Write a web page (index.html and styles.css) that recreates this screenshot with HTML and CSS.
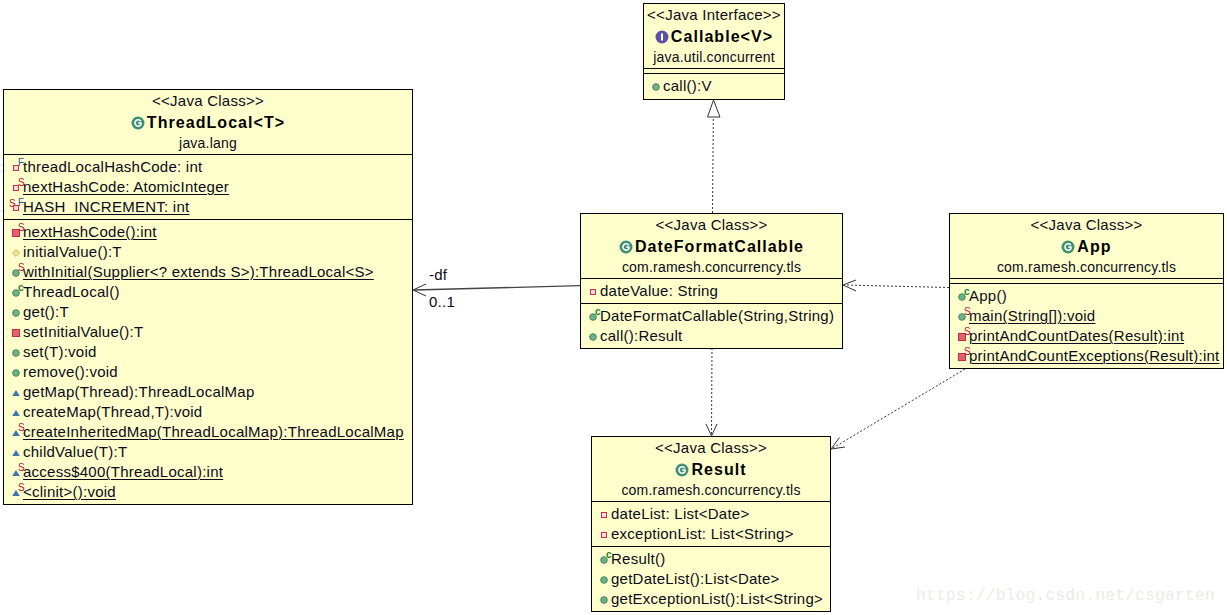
FILE: index.html
```html
<!DOCTYPE html>
<html lang="en">
<head>
<meta charset="utf-8">
<title>UML class diagram</title>
<link rel="stylesheet" href="styles.css">
</head>
<body>
<svg class="defs" width="0" height="0" aria-hidden="true">
  <symbol id="i-pub" viewBox="0 0 8 8"><circle cx="4" cy="4" r="3.3" fill="#6fb088" stroke="#3f8a5f" stroke-width="1"/></symbol>
  <symbol id="i-pri" viewBox="0 0 8 8"><rect x="0.5" y="0.5" width="7" height="7" fill="#e0626e" stroke="#c42a44"/></symbol>
  <symbol id="i-fld" viewBox="0 0 8 8"><rect x="1.5" y="1.5" width="5" height="5" fill="#f8d8d8" stroke="#c8304a"/></symbol>
  <symbol id="i-pkg" viewBox="0 0 8 8"><path d="M4 1 L7.8 7 H0.2 Z" fill="#3c76ae"/></symbol>
  <symbol id="i-pro" viewBox="0 0 8 8"><path d="M4 .6 L7.4 4 L4 7.4 L.6 4 Z" fill="#f4e4a0" stroke="#d8a850"/></symbol>
  <symbol id="i-class" viewBox="0 0 14 14"><circle cx="7" cy="7" r="6.5" fill="#3f8f72"/><path d="M9.8 5.2 A3.2 3.2 0 1 0 9.9 8.6 V7 H7.2" fill="none" stroke="#fff" stroke-width="1.6"/></symbol>
  <symbol id="i-iface" viewBox="0 0 14 14"><circle cx="7" cy="7" r="6.5" fill="#5e4fa6"/><path d="M7 3.4 V10.6" stroke="#fff" stroke-width="2"/></symbol>
</svg>

<main class="canvas">
  <svg class="links" width="1227" height="615" viewBox="0 0 1227 615" aria-hidden="true">
    <path class="dash" d="M712.5 213 L713.3 118"/>
    <path class="hollow" d="M713.5 100 L720 117 H707.5 Z"/>
    <path class="solid" d="M580 285.7 L414 290"/>
    <path class="head" d="M426 284 L413 290 L426 296"/>
    <path class="dash" d="M949 287.5 L844 285"/>
    <path class="head" d="M856 280 L843 285 L856 291"/>
    <path class="dash" d="M712 348 L711.5 435"/>
    <path class="head" d="M706 424 L711.5 436 L717 424"/>
    <path class="dash" d="M965 369 L832 448.5"/>
    <path class="head" d="M845 447 L831 449 L839.4 437.6"/>
  </svg>
  <span class="edge-label label-df">-df</span>
  <span class="edge-label label-mult">0..1</span>

  <section class="box box-threadlocal">
    <header class="head-part">
      <div class="stereo">&lt;&lt;Java Class&gt;&gt;</div>
      <div class="title"><svg class="type-ico"><use href="#i-class"/></svg>ThreadLocal&lt;T&gt;</div>
      <div class="pkg">java.lang</div>
    </header>
    <div class="part">
      <div class="row"><span class="ico"><svg><use href="#i-fld"/></svg><i class="mark f">F</i></span>threadLocalHashCode: int</div>
      <div class="row u"><span class="ico"><svg><use href="#i-fld"/></svg><i class="mark s">S</i></span><span>nextHashCode: AtomicInteger</span></div>
      <div class="row u"><span class="ico"><i class="mark s left">S</i><svg><use href="#i-fld"/></svg><i class="mark f">F</i></span><span>HASH_INCREMENT: int</span></div>
    </div>
    <div class="part">
      <div class="row u"><span class="ico"><svg><use href="#i-pri"/></svg><i class="mark s">S</i></span><span>nextHashCode():int</span></div>
      <div class="row"><span class="ico"><svg><use href="#i-pro"/></svg></span>initialValue():T</div>
      <div class="row u"><span class="ico"><svg><use href="#i-pub"/></svg><i class="mark s">S</i></span><span>withInitial(Supplier&lt;? extends S&gt;):ThreadLocal&lt;S&gt;</span></div>
      <div class="row"><span class="ico"><svg><use href="#i-pub"/></svg><i class="mark c">c</i></span>ThreadLocal()</div>
      <div class="row"><span class="ico"><svg><use href="#i-pub"/></svg></span>get():T</div>
      <div class="row"><span class="ico"><svg><use href="#i-pri"/></svg></span>setInitialValue():T</div>
      <div class="row"><span class="ico"><svg><use href="#i-pub"/></svg></span>set(T):void</div>
      <div class="row"><span class="ico"><svg><use href="#i-pub"/></svg></span>remove():void</div>
      <div class="row"><span class="ico"><svg><use href="#i-pkg"/></svg></span>getMap(Thread):ThreadLocalMap</div>
      <div class="row"><span class="ico"><svg><use href="#i-pkg"/></svg></span>createMap(Thread,T):void</div>
      <div class="row u"><span class="ico"><svg><use href="#i-pkg"/></svg><i class="mark s">S</i></span><span>createInheritedMap(ThreadLocalMap):ThreadLocalMap</span></div>
      <div class="row"><span class="ico"><svg><use href="#i-pkg"/></svg></span>childValue(T):T</div>
      <div class="row u"><span class="ico"><svg><use href="#i-pkg"/></svg><i class="mark s">S</i></span><span>access$400(ThreadLocal):int</span></div>
      <div class="row u"><span class="ico"><svg><use href="#i-pkg"/></svg><i class="mark s">S</i></span><span>&lt;clinit&gt;():void</span></div>
    </div>
  </section>

  <section class="box box-callable">
    <header class="head-part">
      <div class="stereo">&lt;&lt;Java Interface&gt;&gt;</div>
      <div class="title"><svg class="type-ico"><use href="#i-iface"/></svg>Callable&lt;V&gt;</div>
      <div class="pkg">java.util.concurrent</div>
    </header>
    <div class="part"></div>
    <div class="part">
      <div class="row"><span class="ico"><svg><use href="#i-pub"/></svg></span>call():V</div>
    </div>
  </section>

  <section class="box box-dfc">
    <header class="head-part">
      <div class="stereo">&lt;&lt;Java Class&gt;&gt;</div>
      <div class="title"><svg class="type-ico"><use href="#i-class"/></svg>DateFormatCallable</div>
      <div class="pkg">com.ramesh.concurrency.tls</div>
    </header>
    <div class="part">
      <div class="row"><span class="ico"><svg><use href="#i-fld"/></svg></span>dateValue: String</div>
    </div>
    <div class="part">
      <div class="row"><span class="ico"><svg><use href="#i-pub"/></svg><i class="mark c">c</i></span>DateFormatCallable(String,String)</div>
      <div class="row"><span class="ico"><svg><use href="#i-pub"/></svg></span>call():Result</div>
    </div>
  </section>

  <section class="box box-app">
    <header class="head-part">
      <div class="stereo">&lt;&lt;Java Class&gt;&gt;</div>
      <div class="title"><svg class="type-ico"><use href="#i-class"/></svg>App</div>
      <div class="pkg">com.ramesh.concurrency.tls</div>
    </header>
    <div class="part"></div>
    <div class="part">
      <div class="row"><span class="ico"><svg><use href="#i-pub"/></svg><i class="mark c">c</i></span>App()</div>
      <div class="row u"><span class="ico"><svg><use href="#i-pub"/></svg><i class="mark s">S</i></span><span>main(String[]):void</span></div>
      <div class="row u"><span class="ico"><svg><use href="#i-pri"/></svg><i class="mark s">S</i></span><span>printAndCountDates(Result):int</span></div>
      <div class="row u"><span class="ico"><svg><use href="#i-pri"/></svg><i class="mark s">S</i></span><span>printAndCountExceptions(Result):int</span></div>
    </div>
  </section>

  <section class="box box-result">
    <header class="head-part">
      <div class="stereo">&lt;&lt;Java Class&gt;&gt;</div>
      <div class="title"><svg class="type-ico"><use href="#i-class"/></svg>Result</div>
      <div class="pkg">com.ramesh.concurrency.tls</div>
    </header>
    <div class="part">
      <div class="row"><span class="ico"><svg><use href="#i-fld"/></svg></span>dateList: List&lt;Date&gt;</div>
      <div class="row"><span class="ico"><svg><use href="#i-fld"/></svg></span>exceptionList: List&lt;String&gt;</div>
    </div>
    <div class="part">
      <div class="row"><span class="ico"><svg><use href="#i-pub"/></svg><i class="mark c">c</i></span>Result()</div>
      <div class="row"><span class="ico"><svg><use href="#i-pub"/></svg></span>getDateList():List&lt;Date&gt;</div>
      <div class="row"><span class="ico"><svg><use href="#i-pub"/></svg></span>getExceptionList():List&lt;String&gt;</div>
    </div>
  </section>

  <span class="watermark">https://blog.csdn.net/csgarten</span>
</main>
</body>
</html>
```
FILE: styles.css
```css
* { box-sizing: border-box; }
html, body { margin: 0; padding: 0; background: #fff; }
body { width: 1227px; height: 615px; overflow: hidden; font-family: "Liberation Sans", Arial, sans-serif; font-size: 15px; letter-spacing: 0.25px; color: #0a0a1a; }
.defs { position: absolute; }
.canvas { position: relative; width: 1227px; height: 615px; }
.links { position: absolute; left: 0; top: 0; }
.dash { fill: none; stroke: #333; stroke-width: 1; stroke-dasharray: 2 2; }
.solid { fill: none; stroke: #444; stroke-width: 1.3; }
.head { fill: none; stroke: #333; stroke-width: 1; }
.hollow { fill: #fff; stroke: #333; stroke-width: 1; }

.box { position: absolute; display: flex; flex-direction: column; background: #ffffcc; border: 1px solid #000; }
.box-threadlocal { left: 3px; top: 89px; width: 410px; height: 416px; }
.box-callable { left: 643px; top: 3px; width: 142px; height: 97px; }
.box-dfc { left: 580px; top: 213px; width: 263px; height: 136px; }
.box-app { left: 949px; top: 213px; width: 275px; height: 156px; }
.box-result { left: 591px; top: 436px; width: 240px; height: 176px; }

.head-part { display: flex; flex-direction: column; align-items: center; height: 65px; padding-top: 1px; border-bottom: 1px solid #000; }
.stereo, .pkg { height: 20px; line-height: 20px; white-space: nowrap; }
.pkg { font-size: 14px; letter-spacing: 0.2px; }
.title { display: flex; align-items: center; gap: 2px; height: 22px; line-height: 22px; padding-top: 1px; font-size: 16px; letter-spacing: 1.05px; font-weight: 700; white-space: nowrap; color: #000; }
.type-ico { width: 14px; height: 14px; flex: none; }

.part { padding: 2px 0; min-height: 5px; border-bottom: 1px solid #000; }
.part:last-child { border-bottom: 0; }
.row { display: flex; align-items: center; height: 20px; line-height: 20px; white-space: nowrap; }
.row.u > span:last-child { text-decoration: underline; text-underline-offset: 2px; text-decoration-thickness: 1px; }
.ico { position: relative; flex: none; width: 19px; height: 20px; }
.ico svg { position: absolute; left: 8px; top: 7px; width: 8px; height: 8px; }
.mark { position: absolute; left: 14px; top: 0; font-family: "Liberation Sans", Arial, sans-serif; font-size: 10px; line-height: 12px; font-style: normal; letter-spacing: 0; }
.mark.s { color: #b80f44; }
.mark.f { color: #2c50b0; }
.mark.c { color: #1c7a3a; font-weight: 700; left: 14px; }
.mark.left { left: 5px; top: 1px; }

.edge-label { position: absolute; line-height: 20px; }
.label-df { left: 429px; top: 265px; }
.label-mult { left: 429px; top: 292px; }
.watermark { position: absolute; left: 916px; top: 586px; font-family: "Liberation Mono", "DejaVu Sans Mono", monospace; font-size: 16.6px; letter-spacing: 0; line-height: 20px; color: #ecece6; white-space: nowrap; }
```
